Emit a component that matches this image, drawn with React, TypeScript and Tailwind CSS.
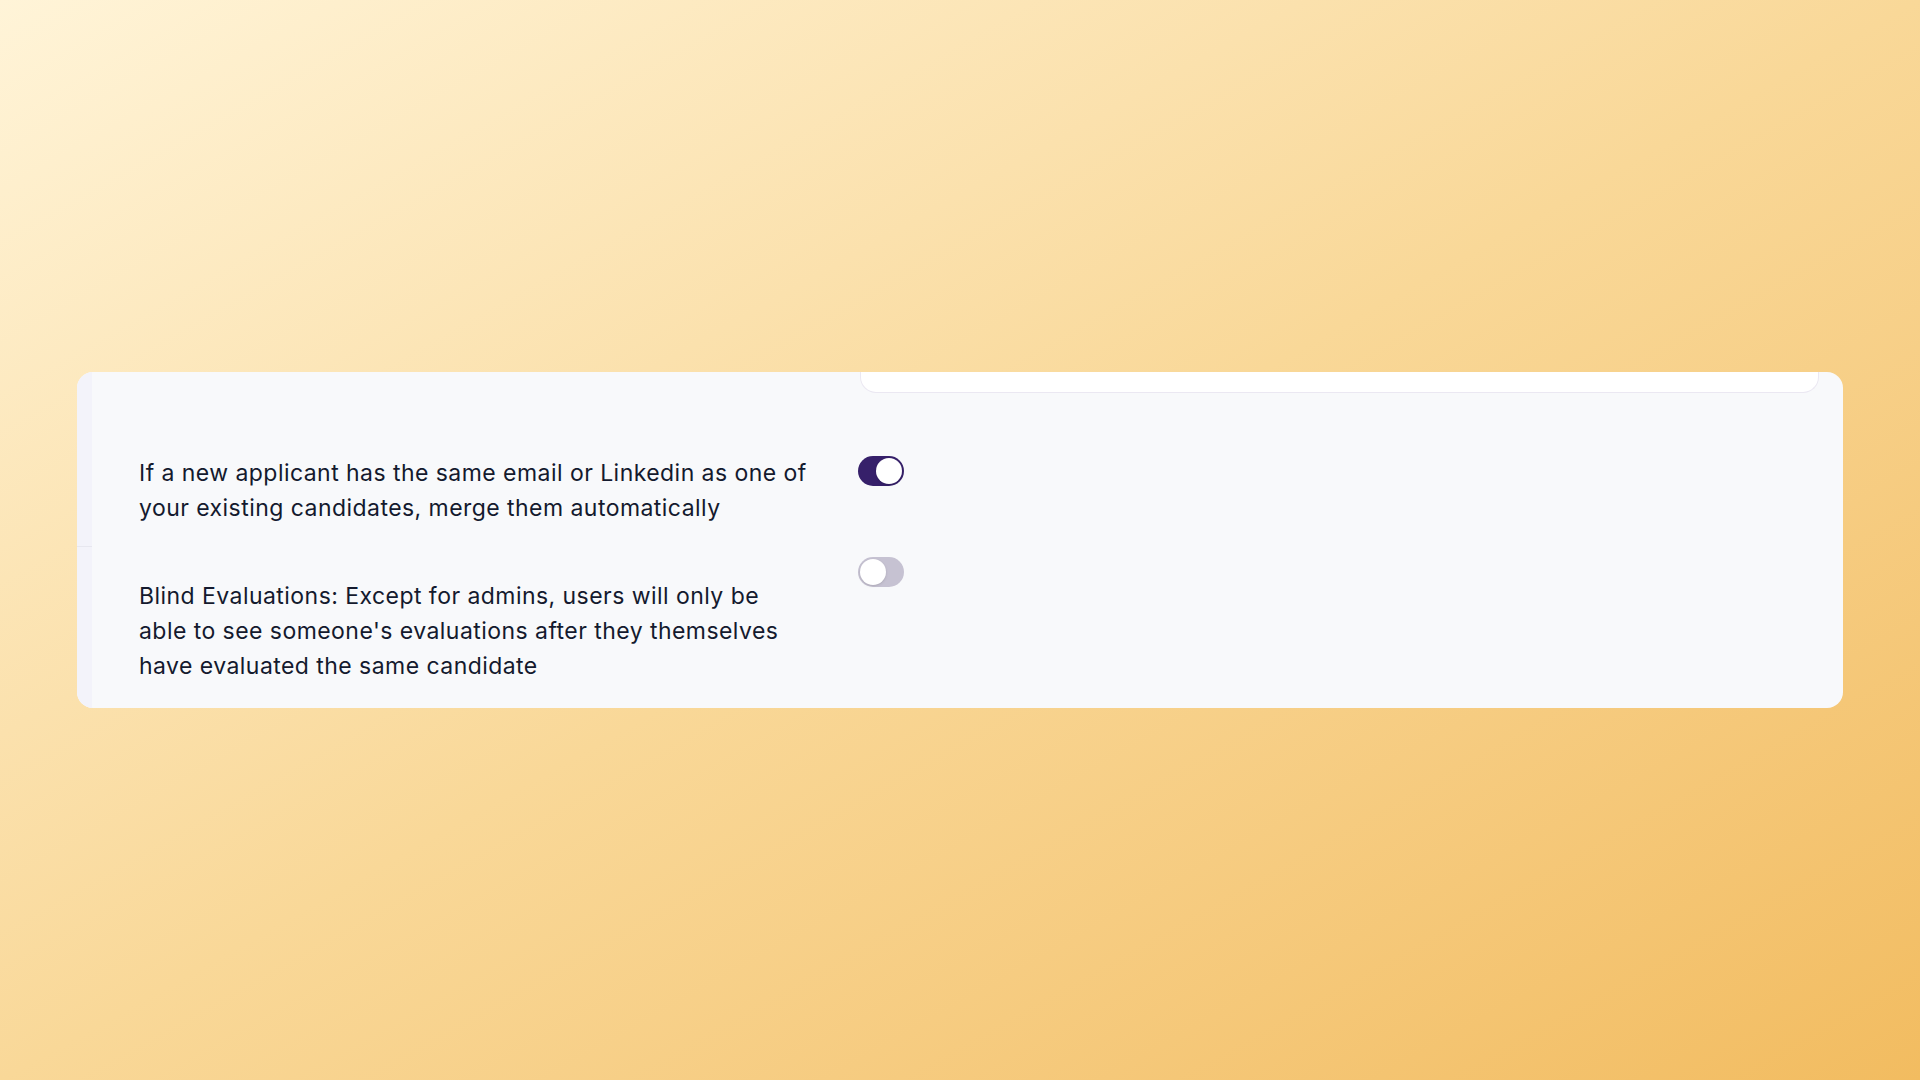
import { useState } from "react";

// Candidate settings: two switch rows inside a light panel, on a warm gradient backdrop.

function Switch({ on, onChange }: { on: boolean; onChange: () => void }) {
  return (
    <button
      type="button"
      role="switch"
      aria-checked={on}
      onClick={onChange}
      className={
        "flex h-[30px] w-[46px] shrink-0 items-center rounded-full p-[2px] transition-colors " +
        (on ? "justify-end bg-[#36206a]" : "justify-start bg-[#c6c2d2]")
      }
    >
      <span className="block h-[26px] w-[26px] rounded-full bg-white shadow-sm" />
    </button>
  );
}

export default function App() {
  const [merge, setMerge] = useState(true);
  const [blind, setBlind] = useState(false);

  return (
    <div
      className="min-h-screen w-full bg-gradient-to-br from-[#fff4d8] via-[#f9d898] to-[#f2bc60] pt-[372px] pl-[77px] pr-[77px]"
      style={{ fontFamily: "Inter, 'Noto Sans', sans-serif" }}
    >
      <div className="flex h-[336px] overflow-hidden rounded-2xl bg-[#f8f9fb]">
        {/* sidebar edge */}
        <div className="w-[15px] shrink-0 bg-[#f3f3fa]">
          <div className="h-[175px] border-b border-[#e7e7ef]" />
        </div>

        <div className="min-w-0 flex-1">
          {/* bottom of the field above, scrolled past */}
          <div className="ml-[768px] mr-[24px] h-[21px] rounded-b-2xl border border-t-0 border-[#ebe8f2] bg-white" />

          <div className="flex flex-col gap-[31px] pl-[47px] pt-[63px] text-[23px] leading-[35px] tracking-[0.45px] text-[#141a2e]">
            <div className="flex items-start">
              <p className="w-[668px]">
                If a new applicant has the same email or Linkedin as one of your existing candidates, merge them automatically
              </p>
              <div className="ml-[51px]">
                <Switch on={merge} onChange={() => setMerge(!merge)} />
              </div>
            </div>

            <div className="flex items-start">
              <p className="mt-[22px] w-[668px]">
                Blind Evaluations: Except for admins, users will only be able to see someone's evaluations after they themselves have evaluated the same candidate
              </p>
              <div className="ml-[51px]">
                <Switch on={blind} onChange={() => setBlind(!blind)} />
              </div>
            </div>
          </div>
        </div>
      </div>
    </div>
  );
}
